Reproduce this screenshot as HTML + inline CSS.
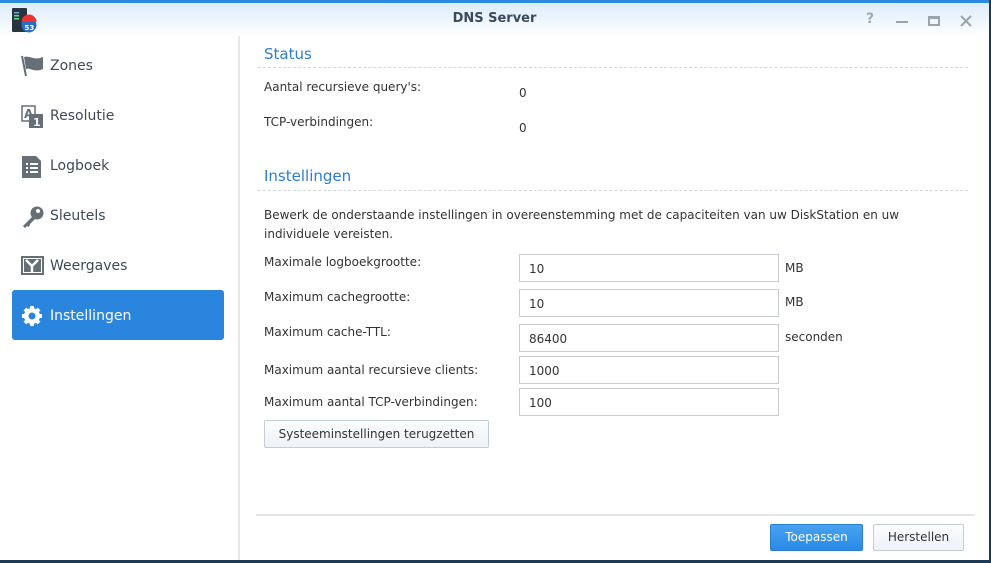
<!DOCTYPE html>
<html><head><style>
*{margin:0;padding:0;box-sizing:border-box}
body{width:991px;height:563px;overflow:hidden;background:#1d3a55;font-family:"DejaVu Sans","Liberation Sans",sans-serif;position:relative}
.win{position:absolute;left:0;top:0;width:989px;height:560px;background:#fff;overflow:hidden}
.topbar{position:absolute;left:0;top:0;width:100%;height:3px;background:#2b8ae0}
.title{position:absolute;left:0;top:3px;width:100%;height:33px;background:linear-gradient(#dcecfa,#fff)}
.title .t{position:absolute;left:0;width:100%;text-align:center;top:8px;font-weight:bold;font-size:13px;color:#3a4a5a}
.side{position:absolute;left:0;top:36px;width:238px;height:524px;background:#fff}
.sep{position:absolute;left:238px;top:36px;width:2px;height:524px;background:#e6e8ea}
.item{position:absolute;left:12px;width:212px;height:50px;font-size:14px;color:#3f4a55;line-height:52px;padding-left:38px}
.item.sel{background:#2a85de;color:#fff;border-radius:3px}
.ic{position:absolute;left:9px;top:15px}
.abs{position:absolute;font-size:12px;color:#333}
h2{position:absolute;left:264px;font-size:15px;font-weight:normal;color:#2b7fcf}
.dash{position:absolute;left:258px;width:710px;border-top:1px dashed #d5d8db}
.inp{position:absolute;left:519px;width:260px;height:28px;border:1px solid #c8ccd0;font-size:12px;color:#333;padding:7px 0 0 9px}
.btn{position:absolute;border:1px solid #c3cdd6;background:linear-gradient(#fbfcfd,#eef3f8);border-radius:2px;font-size:12px;color:#333;text-align:center}
</style></head><body>
<div class="win">
<div class="topbar"></div>
<div class="title"><div class="t">DNS Server</div>
<svg style="position:absolute;left:12px;top:4px" width="26" height="27"><rect x="0" y="1" width="15" height="24" rx="1" fill="#2a3440"/><rect x="2" y="5" width="5" height="1.5" fill="#6ad"/><rect x="2" y="8" width="5" height="1.5" fill="#6d8"/><rect x="2" y="11" width="5" height="1.5" fill="#6d8"/><circle cx="17" cy="18" r="7.5" fill="#2c6fc0"/><path d="M9.5 15a7.5 7.5 0 0 1 15 0z" fill="#e33"/><text x="12.5" y="23" font-size="7" fill="#fff" font-family="DejaVu Sans" font-weight="bold">53</text></svg>
<div style="position:absolute;left:866px;top:8px;font-size:14px;font-weight:bold;color:#a0a9b1">?</div>
<div style="position:absolute;left:896px;top:18px;width:12px;height:2px;background:#9aa4ad"></div>
<div style="position:absolute;left:928px;top:13px;width:12px;height:10px;border:2px solid #9aa4ad;border-top-width:3px"></div>
<svg style="position:absolute;left:960px;top:12px" width="12" height="12"><path d="M1 1L11 11M11 1L1 11" stroke="#9aa4ad" stroke-width="2"/></svg>
</div>
<div class="side">
<div class="item" style="top:4px"><svg class="ic" width="24" height="22"><path d="M1 1L5 21" stroke="#666e76" stroke-width="2"/><path d="M3 2C9 0 13 6 22 2L22 14C13 18 9 12 5 14z" fill="#666e76"/></svg>Zones</div>
<div class="item" style="top:54px"><svg class="ic" width="24" height="24"><rect x="1" y="1" width="13" height="15" fill="none" stroke="#666e76" stroke-width="1.5"/><text x="3" y="13" font-size="12" fill="#666e76" font-weight="bold">A</text><rect x="8" y="9" width="14" height="14" fill="#666e76"/><text x="12" y="21" font-size="11" fill="#fff" font-weight="bold">1</text></svg>Resolutie</div>
<div class="item" style="top:104px"><svg class="ic" width="22" height="24"><path d="M1 1H15L20 6V23H1z" fill="#666e76"/><g fill="#fff"><rect x="5" y="8" width="2" height="2"/><rect x="9" y="8" width="8" height="2"/><rect x="5" y="12" width="2" height="2"/><rect x="9" y="12" width="8" height="2"/><rect x="5" y="16" width="2" height="2"/><rect x="9" y="16" width="8" height="2"/></g></svg>Logboek</div>
<div class="item" style="top:154px"><svg class="ic" width="24" height="24"><circle cx="16" cy="8" r="6.5" fill="#666e76"/><circle cx="17" cy="6" r="2" fill="#fff"/><path d="M12 11L2 21L4 23L6 21L8 22L9 19L14 14z" fill="#666e76"/></svg>Sleutels</div>
<div class="item" style="top:204px"><svg class="ic" width="24" height="22"><rect x="1" y="2" width="21" height="17" fill="none" stroke="#666e76" stroke-width="2"/><path d="M3 4H20V17H3z" fill="#666e76"/><path d="M5 5L11 11L17 5M11 11V17" stroke="#fff" stroke-width="2.5" fill="none"/></svg>Weergaves</div>
<div class="item sel" style="top:254px"><svg class="ic" width="22" height="22"><circle cx="11" cy="11" r="8" fill="#fff"/><g stroke="#fff" stroke-width="4"><path d="M11 1V21M1 11H21M4 4L18 18M18 4L4 18"/></g><circle cx="11" cy="11" r="3.5" fill="#2a85de"/></svg>Instellingen</div>
</div>
<div class="sep"></div>
<h2 style="top:45px">Status</h2>
<div class="dash" style="top:67px"></div>
<div class="abs" style="left:264px;top:80px">Aantal recursieve query's:</div>
<div class="abs" style="left:519px;top:86px">0</div>
<div class="abs" style="left:264px;top:115px">TCP-verbindingen:</div>
<div class="abs" style="left:519px;top:121px">0</div>
<h2 style="top:167px">Instellingen</h2>
<div class="dash" style="top:190px"></div>
<div class="abs" style="left:264px;top:206px;line-height:19px;width:690px">Bewerk de onderstaande instellingen in overeenstemming met de capaciteiten van uw DiskStation en uw individuele vereisten.</div>
<div class="abs" style="left:264px;top:255px">Maximale logboekgrootte:</div>
<div class="inp" style="top:254px">10</div><div class="abs" style="left:785px;top:261px">MB</div>
<div class="abs" style="left:264px;top:290px">Maximum cachegrootte:</div>
<div class="inp" style="top:289px">10</div><div class="abs" style="left:785px;top:295px">MB</div>
<div class="abs" style="left:264px;top:325px">Maximum cache-TTL:</div>
<div class="inp" style="top:324px">86400</div><div class="abs" style="left:785px;top:330px">seconden</div>
<div class="abs" style="left:264px;top:363px">Maximum aantal recursieve clients:</div>
<div class="inp" style="top:356px">1000</div>
<div class="abs" style="left:264px;top:395px">Maximum aantal TCP-verbindingen:</div>
<div class="inp" style="top:388px">100</div>
<div class="btn" style="left:264px;top:420px;width:225px;height:28px;line-height:26px">Systeeminstellingen terugzetten</div>
<div style="position:absolute;left:256px;top:514px;width:719px;height:2px;background:#e4e6e8"></div>
<div class="btn" style="left:770px;top:524px;width:93px;height:27px;line-height:25px;background:linear-gradient(#47a3f0,#2a8ae6);border-color:#2a7fd0;color:#fff">Toepassen</div>
<div class="btn" style="left:873px;top:524px;width:91px;height:27px;line-height:25px">Herstellen</div>
</div>
</body></html>
